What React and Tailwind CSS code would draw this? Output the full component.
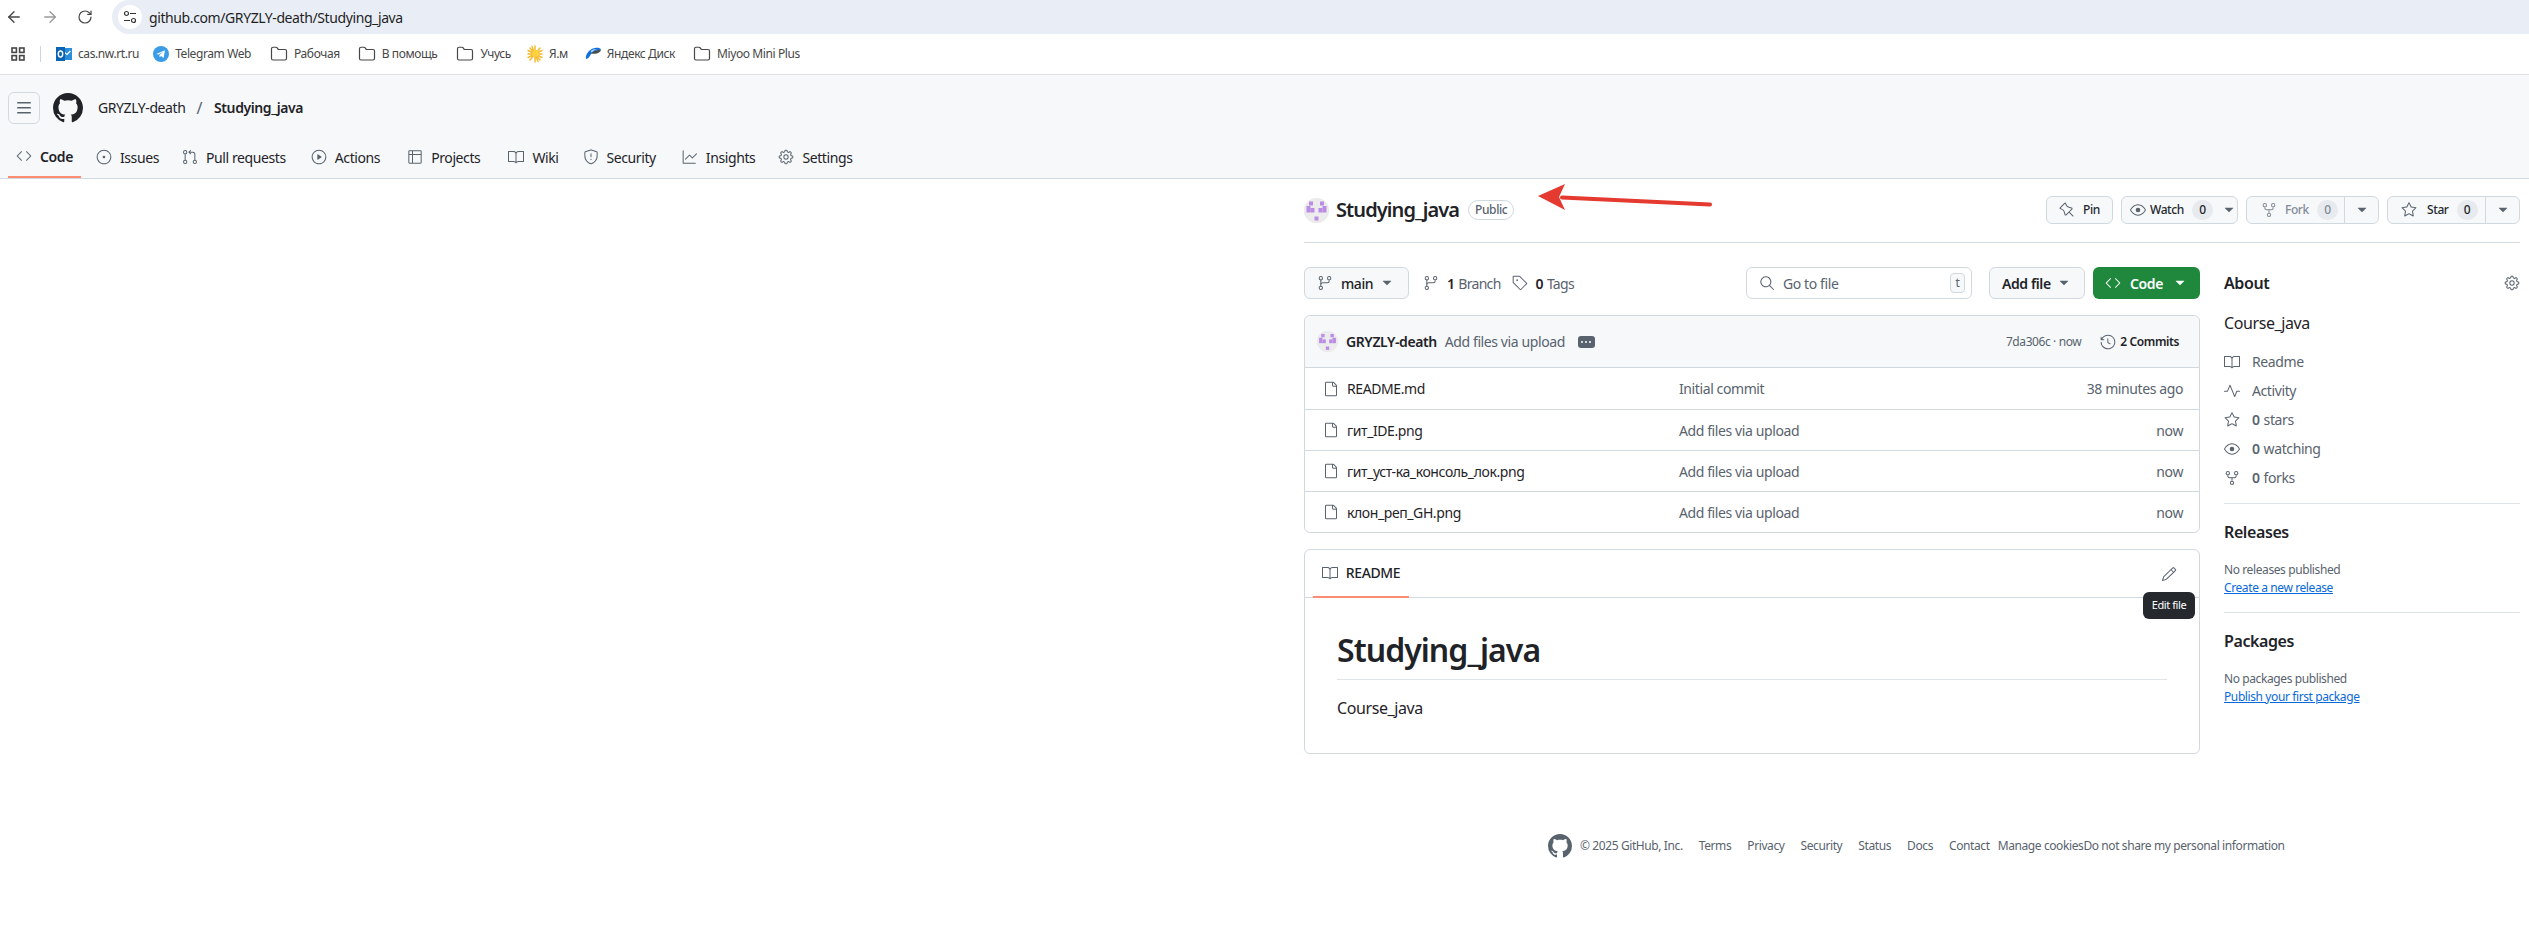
import { ArrowLeft, ArrowRight, RotateCw, Folder } from 'lucide-react';
import {
  GoBook, GoCode, GoEye, GoFile, GoGear, GoGitBranch, GoGitPullRequest, GoGraph, GoHistory,
  GoIssueOpened, GoKebabHorizontal, GoPencil, GoPin, GoPlay, GoPulse, GoRepoForked,
  GoSearch, GoShield, GoStar, GoTable, GoTag, GoTriangleDown,
} from 'react-icons/go';

const tabs = [
  { icon: GoCode, label: 'Code', active: true, gap: 'mr-[7px]' },
  { icon: GoIssueOpened, label: 'Issues', gap: 'mr-[7px]' },
  { icon: GoGitPullRequest, label: 'Pull requests', gap: 'mr-[9px]' },
  { icon: GoPlay, label: 'Actions', gap: 'mr-[11px]' },
  { icon: GoTable, label: 'Projects', gap: 'mr-[12px]' },
  { icon: GoBook, label: 'Wiki', gap: 'mr-[8px]' },
  { icon: GoShield, label: 'Security', gap: 'mr-[10px]' },
  { icon: GoGraph, label: 'Insights', gap: 'mr-[7px]' },
  { icon: GoGear, label: 'Settings', gap: 'mr-[7px]' },
];

const files = [
  { name: 'README.md', message: 'Initial commit', time: '38 minutes ago' },
  { name: 'гит_IDE.png', message: 'Add files via upload', time: 'now' },
  { name: 'гит_уст-ка_консоль_лок.png', message: 'Add files via upload', time: 'now' },
  { name: 'клон_реп_GH.png', message: 'Add files via upload', time: 'now' },
];

const footerLinks = ['Terms', 'Privacy', 'Security', 'Status', 'Docs', 'Contact'];

function GithubMark({ size, className }) {
  return (
    <svg width={size} height={size} viewBox="0 0 16 16" fill="currentColor" className={className}>
      <path d="M8 0c4.42 0 8 3.58 8 8a8.013 8.013 0 0 1-5.45 7.59c-.4.08-.55-.17-.55-.38 0-.27.01-1.13.01-2.2 0-.75-.25-1.23-.54-1.48 1.78-.2 3.65-.88 3.65-3.95 0-.88-.31-1.59-.82-2.15.08-.2.36-1.02-.08-2.12 0 0-.67-.22-2.2.82-.64-.18-1.32-.27-2-.27-.68 0-1.36.09-2 .27-1.53-1.03-2.2-.82-2.2-.82-.44 1.1-.16 1.92-.08 2.12-.51.56-.82 1.28-.82 2.15 0 3.06 1.86 3.75 3.64 3.95-.23.2-.44.55-.51 1.07-.46.21-1.61.55-2.33-.66-.15-.24-.6-.83-1.23-.82-.67.01-.27.38.01.53.34.19.73.9.82 1.13.16.45.68 1.31 2.69.94 0 .67.01 1.3.01 1.49 0 .21-.15.45-.55.38A7.995 7.995 0 0 1 0 8c0-4.42 3.58-8 8-8Z" />
    </svg>
  );
}

// Аватар-идентикон
function Identicon({ size }) {
  return (
    <svg width={size} height={size} viewBox="0 0 50 50" className="shrink-0">
      <circle cx="25" cy="25" r="24.5" fill="#ececec" stroke="#e0e0e0" />
      <g fill="#bb8ce6">
        <rect x="10" y="7" width="8" height="8" />
        <rect x="32" y="7" width="8" height="8" />
        <rect x="5" y="16" width="8" height="13" />
        <rect x="13" y="20" width="8" height="9" />
        <rect x="29" y="20" width="8" height="9" />
        <rect x="37" y="16" width="8" height="13" />
        <rect x="21" y="37" width="8" height="8" />
      </g>
    </svg>
  );
}

function FolderMark() {
  return <Folder size={18} strokeWidth={1.6} className="text-[#474747] shrink-0" />;
}

function Bookmark({ icon, label, className }) {
  return (
    <div className={`flex items-center gap-[6px] ${className}`}>
      {icon}
      <span className="text-[12px] text-[#474747] whitespace-nowrap">{label}</span>
    </div>
  );
}

function Counter({ children, muted }) {
  return (
    <span className={`w-[21px] h-[20px] rounded-full bg-[#e7eaee] flex items-center justify-center text-[12px] font-medium ${muted ? 'text-[#818b98]' : 'text-[#1f2328]'}`}>
      {children}
    </span>
  );
}

function Caret({ className = 'text-[#59636e]' }) {
  return <GoTriangleDown size={16} className={className} />;
}

function Button({ className = '', children }) {
  return (
    <div className={`h-[28px] flex items-center border border-[#d1d9e0] rounded-md bg-[#f6f8fa] text-[12px] font-medium text-[#25292e] ${className}`}>
      {children}
    </div>
  );
}

function SideHeading({ children }) {
  return <h2 className="text-[16px] leading-[24px] font-semibold text-[#1f2328]">{children}</h2>;
}

function SideStat({ icon: Icon, count, label }) {
  return (
    <div className="h-[29px] flex items-center gap-[12px] text-[14px] text-[#59636e]">
      <Icon size={16} className="shrink-0" />
      <span className="flex gap-[4px]">
        {count && <b className="font-semibold">{count}</b>}
        <span>{label}</span>
      </span>
    </div>
  );
}

export default function App() {
  return (
    <div className="min-h-[937px] bg-white font-['Noto_Sans',sans-serif] tracking-[-0.025em] text-[#1f2328] overflow-hidden">
      {/* Адресная строка */}
      <div className="h-[34px] flex items-center">
        <div className="w-[112px] flex items-center pl-[5px] gap-[18px] text-[#474747]">
          <ArrowLeft size={18} strokeWidth={1.8} />
          <ArrowRight size={18} strokeWidth={1.8} className="text-[#9a9a9a]" />
          <RotateCw size={16} strokeWidth={1.8} />
        </div>
        <div className="flex-1 h-[34px] bg-[#e9eef6] rounded-l-[17px] flex items-center pl-[6px]">
          <div className="w-[24px] h-[24px] rounded-full bg-white flex items-center justify-center">
            <svg width="14" height="14" viewBox="0 0 14 14" fill="none" stroke="#333" strokeWidth="1.2">
              <circle cx="3.5" cy="3.5" r="2" />
              <path d="M7 3.5h6M1 10.5h6" />
              <circle cx="10.5" cy="10.5" r="2" />
            </svg>
          </div>
          <span className="ml-[7px] text-[14px] text-[#1f1f1f]">github.com/GRYZLY-death/Studying_java</span>
        </div>
      </div>

      {/* Закладки */}
      <div className="h-[41px] flex items-center border-b border-[#dfe1e3] pl-[11px]">
        <svg width="14" height="14" viewBox="0 0 14 14" fill="none" stroke="#474747" strokeWidth="1.6" className="shrink-0">
          <rect x="1" y="1" width="4.4" height="4.4" />
          <rect x="8.6" y="1" width="4.4" height="4.4" />
          <rect x="1" y="8.6" width="4.4" height="4.4" />
          <rect x="8.6" y="8.6" width="4.4" height="4.4" />
        </svg>
        <div className="w-px h-[16px] bg-[#c7d6ee] ml-[15px] mr-[15px]" />
        <Bookmark
          label="cas.nw.rt.ru"
          icon={
            <svg width="16" height="16" viewBox="0 0 16 16" className="shrink-0">
              <rect x="6" y="2" width="10" height="12" fill="#2a8fd8" />
              <path d="M8 6l3 2.4L14.4 5" fill="none" stroke="#fff" strokeWidth="1.2" />
              <rect x="0" y="1" width="9" height="14" fill="#0a64b4" />
              <ellipse cx="4.5" cy="8" rx="2.2" ry="3" fill="none" stroke="#fff" strokeWidth="1.4" />
            </svg>
          }
        />
        <Bookmark
          className="ml-[14px]"
          label="Telegram Web"
          icon={
            <svg width="16" height="16" viewBox="0 0 16 16" className="shrink-0">
              <circle cx="8" cy="8" r="8" fill="#3a9be6" />
              <path d="M3.2 7.9l8.8-3.6-1.4 7.6-2.6-1.9-1.3 1.3-.3-2.4 3.9-3.1-4.9 2.8z" fill="#fff" />
            </svg>
          }
        />
        <Bookmark className="ml-[19px]" label="Рабочая" icon={<FolderMark />} />
        <Bookmark className="ml-[18px]" label="В помощь" icon={<FolderMark />} />
        <Bookmark className="ml-[19px]" label="Учусь" icon={<FolderMark />} />
        <Bookmark
          className="ml-[16px]"
          label="Я.м"
          icon={
            <svg width="16" height="18" viewBox="0 0 16 18" className="shrink-0">
              <g stroke="#f5bb2e" strokeWidth="1.5" strokeLinecap="round">
                <path d="M8 1v16M1 9h14M3 3l10 12M13 3L3 15M5 1.5l6 15M1 5.5l14 7M1 12.5l14-7" />
              </g>
              <circle cx="8.5" cy="8.5" r="3.4" fill="#ffd23f" />
            </svg>
          }
        />
        <Bookmark
          className="ml-[17px]"
          label="Яндекс Диск"
          icon={
            <svg width="16" height="14" viewBox="0 0 16 14" className="shrink-0">
              <path d="M1 12C0 8 4 2 10 1c3-.5 5.500 0 6 1.500C12 3 9 4 7 6c-2 2-3 6-6 6z" fill="#0f6fe0" />
              <path d="M6 6.500C8 4 12 3 16 2.500c-.5 3-4 5-10 4z" fill="#111" opacity=".75" />
              <path d="M5.500 4C7 2.700 9.500 2 12 2 10 3 8 4 6.500 5.500z" fill="#bcd8fb" />
            </svg>
          }
        />
        <Bookmark className="ml-[18px]" label="Miyoo Mini Plus" icon={<FolderMark />} />
      </div>

      {/* Шапка GitHub */}
      <header className="h-[104px] bg-[#f6f8fa] border-b border-[#d1d9e0]">
        <div className="h-[65px] flex items-center pl-[8px]">
          <div className="w-[32px] h-[32px] rounded-md border border-[#d1d9e0] flex items-center justify-center text-[#59636e]">
            <svg width="16" height="16" viewBox="0 0 16 16" fill="currentColor">
              <path d="M1 2.750A.75.75 0 0 1 1.750 2h12.500a.75.75 0 0 1 0 1.500H1.750A.75.75 0 0 1 1 2.750Zm0 5A.75.75 0 0 1 1.750 7h12.500a.75.75 0 0 1 0 1.500H1.750A.75.75 0 0 1 1 7.750ZM1.750 12h12.500a.75.75 0 0 1 0 1.500H1.750a.75.75 0 0 1 0-1.500Z" />
            </svg>
          </div>
          <GithubMark size={30} className="ml-[13px] text-[#1f2328]" />
          <span className="ml-[15px] text-[14px] text-[#1f2328]">GRYZLY-death</span>
          <span className="ml-[11px] text-[16px] text-[#59636e]">/</span>
          <span className="ml-[12px] text-[14px] font-semibold">Studying_java</span>
        </div>
        <nav className="h-[38px] flex pl-[8px]">
          {tabs.map(({ icon: Icon, label, active, gap }) => (
            <div
              key={label}
              className={`relative h-[38px] flex items-center gap-[8px] px-[8px] pb-[4px] text-[14px] ${gap} ${active ? 'font-semibold text-[#1f2328] border-b-2 border-[#fd8c73]' : 'text-[#1f2328]'}`}
            >
              <Icon size={16} className="text-[#59636e]" />
              {label}
            </div>
          ))}
        </nav>
      </header>

      {/* Репозиторий */}
      <main className="flex pl-[1304px] pr-[9px]">
        <div className="flex-1 min-w-0">
          <div className="relative h-[64px] flex items-center justify-between border-b border-[#d1d9e0] pb-[1px]">
            <div className="flex items-center">
              <Identicon size={25} />
              <span className="ml-[7px] text-[20px] font-semibold leading-[26px] tracking-[-0.045em]">Studying_java</span>
              <span className="ml-[9px] h-[20px] px-[6px] flex items-center rounded-full border border-[#d1d9e0] text-[12px] font-medium text-[#59636e]">
                Public
              </span>
              {/* Стрелка поверх скриншота */}
              <svg width="180" height="30" viewBox="0 0 180 30" className="absolute left-[228px] top-[3px]">
                <path d="M178 22.500L30 15.500" stroke="#e53a30" strokeWidth="4" strokeLinecap="round" />
                <path d="M6 14L33 2 27 15 33 28z" fill="#e53a30" />
              </svg>
            </div>
            <div className="flex items-center gap-[8px]">
              <Button className="w-[67px] justify-center gap-[8px]">
                <GoPin size={16} className="text-[#59636e]" />
                Pin
              </Button>
              <Button className="w-[117px] pl-[8px] gap-[4px]">
                <GoEye size={16} className="text-[#59636e]" />
                Watch
                <span className="ml-[4px]"><Counter>0</Counter></span>
                <Caret className="text-[#59636e] ml-[4px]" />
              </Button>
              <Button className="w-[133px] bg-[#eff2f5]">
                <span className="w-[98px] h-full flex items-center pl-[14px] gap-[8px] border-r border-[#d1d9e0] text-[#818b98]">
                  <GoRepoForked size={16} />
                  Fork
                  <Counter muted>0</Counter>
                </span>
                <span className="flex-1 flex justify-center"><Caret /></span>
              </Button>
              <Button className="w-[133px]">
                <span className="w-[98px] h-full flex items-center pl-[13px] gap-[8px] border-r border-[#d1d9e0]">
                  <GoStar size={16} className="text-[#59636e]" />
                  <span className="ml-[2px]">Star</span>
                  <Counter>0</Counter>
                </span>
                <span className="flex-1 flex justify-center"><Caret /></span>
              </Button>
            </div>
          </div>

          <div className="flex mt-[24px]">
            <div className="w-[896px] shrink-0">
              {/* Панель ветки и поиска */}
              <div className="h-[32px] flex items-center">
                <div className="w-[105px] h-[32px] flex items-center pl-[12px] border border-[#d1d9e0] rounded-md bg-[#f6f8fa] text-[14px] font-medium">
                  <GoGitBranch size={16} className="text-[#59636e]" />
                  <span className="ml-[8px]">main</span>
                  <Caret className="text-[#59636e] ml-[6px]" />
                </div>
                <div className="ml-[14px] flex items-center gap-[8px] text-[14px] text-[#59636e]">
                  <GoGitBranch size={16} />
                  <span className="flex gap-[4px] tracking-[-0.05em]"><b className="font-semibold text-[#1f2328]">1</b><span>Branch</span></span>
                </div>
                <div className="ml-[11px] flex items-center gap-[8px] text-[14px] text-[#59636e]">
                  <GoTag size={16} />
                  <span className="flex gap-[4px] tracking-[-0.05em]"><b className="font-semibold text-[#1f2328]">0</b><span>Tags</span></span>
                </div>
                <div className="ml-auto w-[226px] h-[32px] flex items-center pl-[12px] pr-[6px] border border-[#d1d9e0] rounded-md bg-white text-[14px] text-[#59636e]">
                  <GoSearch size={16} />
                  <span className="ml-[8px]">Go to file</span>
                  <span className="ml-auto w-[15px] h-[20px] flex items-center justify-center rounded-[4px] border border-[#d1d9e0] bg-[#f6f8fa] text-[12px]">t</span>
                </div>
                <div className="ml-[17px] w-[96px] h-[32px] flex items-center justify-between px-[12px] border border-[#d1d9e0] rounded-md bg-[#f6f8fa] text-[14px] font-semibold">
                  Add file
                  <Caret />
                </div>
                <div className="ml-[8px] w-[107px] h-[32px] flex items-center justify-between px-[12px] rounded-md bg-[#1f883d] text-white text-[14px] font-semibold">
                  <GoCode size={16} />
                  Code
                  <GoTriangleDown size={16} />
                </div>
              </div>

              {/* Таблица файлов */}
              <div className="mt-[16px] border border-[#d1d9e0] rounded-md">
                <div className="h-[52px] flex items-center pl-[12px] pr-[20px] bg-[#f6f8fa] rounded-t-md border-b border-[#d1d9e0] text-[14px]">
                  <Identicon size={21} />
                  <span className="ml-[8px] font-semibold">GRYZLY-death</span>
                  <span className="ml-[8px] text-[#59636e]">Add files via upload</span>
                  <span className="ml-[13px] w-[17px] h-[12px] rounded-[3px] bg-[#59636e] text-white flex items-center justify-center">
                    <GoKebabHorizontal size={12} />
                  </span>
                  <span className="ml-auto text-[12px] text-[#59636e]">7da306c · now</span>
                  <span className="ml-[19px] flex items-center gap-[4px] text-[12px] font-semibold">
                    <GoHistory size={16} className="text-[#59636e]" />
                    2 Commits
                  </span>
                </div>
                {files.map((file, i) => (
                  <div
                    key={file.name}
                    className={`h-[41px] flex items-center pl-[18px] pr-[16px] text-[14px] ${i > 0 ? 'border-t border-[#d1d9e0]' : ''}`}
                  >
                    <GoFile size={16} className="text-[#59636e] shrink-0" />
                    <span className="ml-[8px] w-[332px] shrink-0">{file.name}</span>
                    <span className="text-[#59636e]">{file.message}</span>
                    <span className="ml-auto text-[#59636e]">{file.time}</span>
                  </div>
                ))}
              </div>

              {/* README */}
              <div className="relative mt-[16px] h-[205px] border border-[#d1d9e0] rounded-md">
                <div className="h-[48px] flex items-center border-b border-[#d1d9e0] pl-[8px]">
                  <div className="relative h-[48px] w-[96px] flex items-center justify-center gap-[8px] border-b-2 border-[#fd8c73] text-[14px] font-medium">
                    <GoBook size={16} className="text-[#59636e]" />
                    README
                  </div>
                  <GoPencil size={16} className="ml-auto mr-[22px] text-[#59636e]" />
                </div>
                <div className="absolute right-[4px] top-[42px] w-[52px] h-[27px] rounded-md bg-[#25292e] text-white text-[11px] flex items-center justify-center">
                  Edit file
                </div>
                <div className="px-[32px] pt-[32px]">
                  <h1 className="text-[32px] leading-[40px] font-semibold pb-[9px] border-b border-[#d1d9e0b3] tracking-[-0.03em]">Studying_java</h1>
                  <p className="mt-[16px] text-[16px] leading-[24px]">Course_java</p>
                </div>
              </div>
            </div>

            {/* Боковая колонка */}
            <aside className="ml-[24px] flex-1 min-w-0">
              <div className="flex items-center justify-between h-[32px]">
                <SideHeading>About</SideHeading>
                <GoGear size={16} className="text-[#59636e]" />
              </div>
              <p className="mt-[12px] text-[16px] leading-[24px]">Course_java</p>
              <div className="mt-[12px]">
                <SideStat icon={GoBook} label="Readme" />
                <SideStat icon={GoPulse} label="Activity" />
                <SideStat icon={GoStar} count="0" label="stars" />
                <SideStat icon={GoEye} count="0" label="watching" />
                <SideStat icon={GoRepoForked} count="0" label="forks" />
              </div>
              <div className="mt-[11px] border-t border-[#d1d9e0b3] pt-[16px]">
                <SideHeading>Releases</SideHeading>
                <p className="mt-[17px] text-[12px] leading-[18px] text-[#59636e]">No releases published</p>
                <a className="block w-fit text-[12px] leading-[18px] text-[#0969da] underline">Create a new release</a>
              </div>
              <div className="mt-[15px] border-t border-[#d1d9e0b3] pt-[16px]">
                <SideHeading>Packages</SideHeading>
                <p className="mt-[17px] text-[12px] leading-[18px] text-[#59636e]">No packages published</p>
                <a className="block w-fit text-[12px] leading-[18px] text-[#0969da] underline">Publish your first package</a>
              </div>
            </aside>
          </div>
        </div>
      </main>

      {/* Подвал */}
      <footer className="mt-[80px] ml-[1548px] flex items-center text-[12px] text-[#59636e] whitespace-nowrap">
        <GithubMark size={24} />
        <span className="ml-[8px]">© 2025 GitHub, Inc.</span>
        <div className="ml-[16px] flex gap-[16px]">
          {footerLinks.map((link) => <span key={link}>{link}</span>)}
        </div>
        <span className="ml-[8px]">Manage cookies</span>
        <span>Do not share my personal information</span>
      </footer>
    </div>
  );
}
